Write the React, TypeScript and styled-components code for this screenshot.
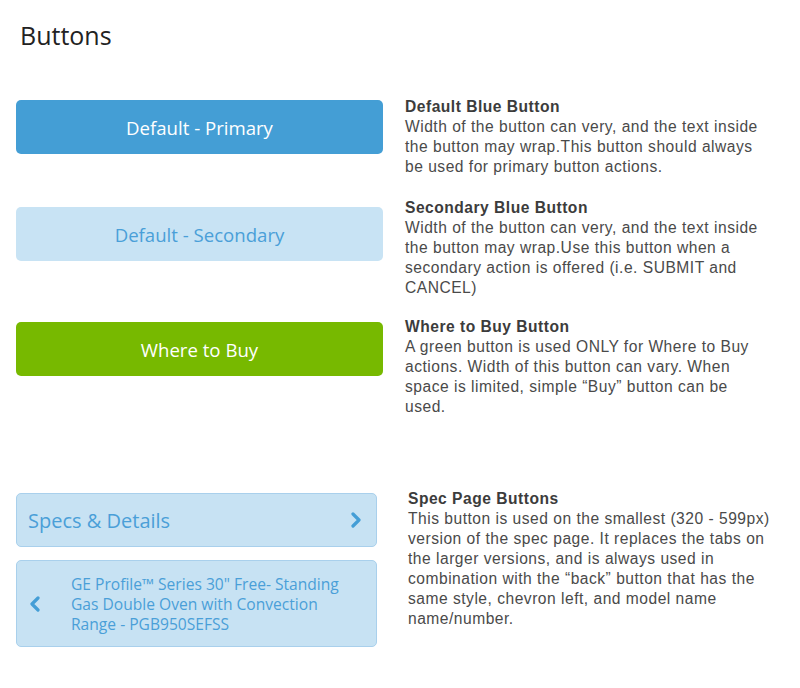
import styled, { createGlobalStyle } from 'styled-components';

const GlobalStyle = createGlobalStyle`
    body {
        margin: 0;
        background: #ffffff;
        font-family: 'Liberation Sans', Arial, sans-serif;
    }
`;

const rows = [
    {
        title: 'Default Blue Button',
        text: 'Width of the button can very, and the text inside the button may wrap.This button should always be used for primary button actions.',
    },
    {
        title: 'Secondary Blue Button',
        text: 'Width of the button can very, and the text inside the button may wrap.Use this button when a secondary action is offered (i.e. SUBMIT and CANCEL)',
    },
    {
        title: 'Where to Buy Button',
        text: 'A green button is used ONLY for Where to Buy actions. Width of this button can vary. When space is limited, simple “Buy” button can be used.',
    },
    {
        title: 'Spec Page Buttons',
        text: 'This button is used on the smallest (320 - 599px) version of the spec page. It replaces the tabs on the larger versions, and is always used in combination with the “back” button that has the same style, chevron left, and model name name/number.',
    },
];

const Chevron = ({ dir }: { dir: 'left' | 'right' }) => (
    <svg width="12" height="16" viewBox="0 0 12 16">
        <path
            d={dir === 'right' ? 'M3 2 L9 8 L3 14' : 'M9 2 L3 8 L9 14'}
            fill="none"
            stroke="#449ed6"
            strokeWidth="3.2"
            strokeLinecap="round"
            strokeLinejoin="round"
        />
    </svg>
);

export default function App() {
    return (
        <SPage>
            <GlobalStyle />
            <STitle>Buttons</STitle>
            <SRow $top={45} $offset={3}>
                <SButton $variant="primary">Default - Primary</SButton>
                <Desc {...rows[0]} />
            </SRow>
            <SRow $top={21} $offset={9}>
                <SButton $variant="secondary">Default - Secondary</SButton>
                <Desc {...rows[1]} />
            </SRow>
            <SRow $top={19} $offset={5}>
                <SButton $variant="green">Where to Buy</SButton>
                <Desc {...rows[2]} />
            </SRow>
            <SRow $top={72} $offset={4} $narrow>
                <SSpecStack>
                    <SSpecButton>
                        <SSpecLabel>Specs &amp; Details</SSpecLabel>
                        <Chevron dir="right" />
                    </SSpecButton>
                    <SBackButton>
                        <Chevron dir="left" />
                        <SBackLabel>
                            GE Profile™ Series 30" Free- Standing Gas Double Oven with Convection
                            Range - PGB950SEFSS
                        </SBackLabel>
                    </SBackButton>
                </SSpecStack>
                <Desc {...rows[3]} width={368} />
            </SRow>
        </SPage>
    );
}

const Desc = ({ title, text, width = 356 }: { title: string; text: string; width?: number }) => (
    <SDesc $width={width}>
        <SDescTitle>{title}</SDescTitle>
        <SDescText>{text}</SDescText>
    </SDesc>
);

const SPage = styled.div`
    width: 800px;
    padding: 18px 0 0 16px;
    box-sizing: border-box;
`;

const STitle = styled.h1`
    margin: 0 0 0 4px;
    font-family: 'Open Sans', sans-serif;
    font-weight: 400;
    font-size: 25px;
    line-height: 34px;
    color: #222222;
`;

const SRow = styled.div<{ $top: number; $offset: number; $narrow?: boolean }>`
    display: grid;
    grid-template-columns: ${(p) => (p.$narrow ? '361px 31px' : '367px 22px')} 1fr;
    grid-template-areas: 'btn . desc';
    align-items: start;
    margin-top: ${(p) => p.$top}px;

    & > :first-child {
        grid-area: btn;
        margin-top: ${(p) => p.$offset}px;
    }
`;

const variants = {
    primary: { bg: '#449ed5', fg: '#ffffff' },
    secondary: { bg: '#c8e3f4', fg: '#4a9fd8' },
    green: { bg: '#77b900', fg: '#ffffff' },
};

const SButton = styled.div<{ $variant: keyof typeof variants }>`
    height: 54px;
    border-radius: 5px;
    background: ${(p) => variants[p.$variant].bg};
    color: ${(p) => variants[p.$variant].fg};
    display: flex;
    align-items: center;
    justify-content: center;
    font-family: 'Open Sans', sans-serif;
    font-size: 18.6px;
`;

const SSpecStack = styled.div`
    display: flex;
    flex-direction: column;
    gap: 13px;
`;

const SSpecButton = styled.div`
    height: 54px;
    box-sizing: border-box;
    border: 1px solid #a9d0ec;
    border-radius: 5px;
    background: #c7e2f3;
    display: flex;
    align-items: center;
    justify-content: space-between;
    padding: 0 14px 0 11px;
`;

const SSpecLabel = styled.span`
    font-family: 'Open Sans', sans-serif;
    font-size: 20px;
    color: #4a9fd8;
`;

const SBackButton = styled(SSpecButton)`
    height: 87px;
    justify-content: flex-start;
    gap: 30px;
    padding: 0 14px 0 12px;
`;

const SBackLabel = styled.span`
    font-family: 'Open Sans', sans-serif;
    font-size: 15.6px;
    line-height: 20px;
    color: #4a9fd8;
    width: 280px;
`;

const SDesc = styled.div<{ $width: number }>`
    grid-area: desc;
    font-size: 15.6px;
    letter-spacing: 0.5px;
    line-height: 20px;
    color: #4a4a4a;
    max-width: ${(p) => p.$width}px;
`;

const SDescTitle = styled.div`
    font-weight: 700;
    color: #3c3c3c;
`;

const SDescText = styled.div``;
